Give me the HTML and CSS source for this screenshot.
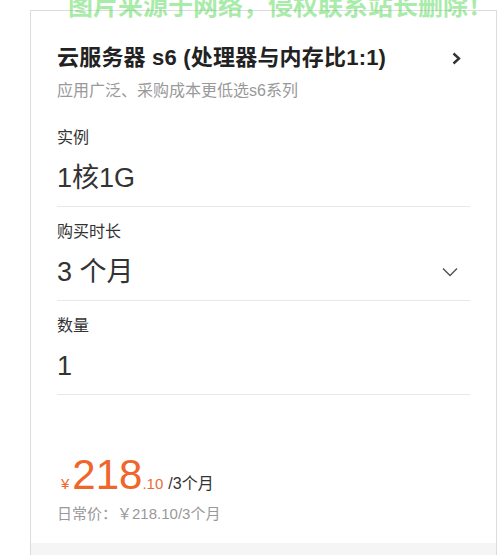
FILE: index.html
```html
<!DOCTYPE html>
<html lang="zh-CN">
<head>
  <meta charset="UTF-8" />
  <meta name="viewport" content="width=device-width, initial-scale=1.0"/>
  <title>云服务器 s6</title>
  <link rel="stylesheet" href="styles.css">
</head>

<body>

  <!-- Watermark -->
  <div class="watermark">图片来源于网络，侵权联系站长删除！</div>

  <div class="page">
    <div class="card">

      <!-- Product header -->
      <div class="card-head">
        <div class="title-row">
          <h2>云服务器 s6 (处理器与内存比1:1)</h2>
          <svg class="arrow-right" width="9" height="13" viewBox="0 0 9 13">
            <polyline points="1.5,1.5 7,6.5 1.5,11.5" fill="none" stroke="#333" stroke-width="2.4"/>
          </svg>
        </div>
        <p class="subtitle">应用广泛、采购成本更低选s6系列</p>
      </div>

      <!-- Options -->
      <div class="field">
        <div class="label">实例</div>
        <div class="value">1核1G</div>
      </div>

      <div class="field">
        <div class="label">购买时长</div>
        <div class="value value-select">
          <span>3 个月</span>
          <svg class="arrow-down" width="16" height="10" viewBox="0 0 16 10">
            <polyline points="1,1.5 8,8.5 15,1.5" fill="none" stroke="#555" stroke-width="1.5"/>
          </svg>
        </div>
      </div>

      <div class="field">
        <div class="label">数量</div>
        <div class="value">1</div>
      </div>

      <!-- Price -->
      <div class="price-box">
        <div class="price">
          <span class="yen">¥</span>
          <span class="amount">218</span>
          <span class="cents">.10</span>
          <span class="period">/3个月</span>
        </div>
        <div class="normal-price">日常价：￥218.10/3个月</div>
      </div>

      <div class="card-foot"></div>
    </div>
  </div>

</body>
</html>
```

FILE: styles.css
```css
body {
  margin: 0;
  font-family: "Liberation Sans", "Noto Sans CJK SC", sans-serif;
  background: #fff;
  color: #333;
  overflow: hidden;
}

.watermark {
  position: absolute;
  top: -14px;
  left: 68px;
  font-size: 25px;
  font-weight: bold;
  white-space: nowrap;
  color: rgba(60, 210, 60, 0.45);
  z-index: 2;
}

.page {
  padding: 10px 3px 0 30px;
}

.card {
  width: 467px;
  box-sizing: border-box;
  border: 1px solid #dcdcdc;
  border-bottom: none;
  background: #fff;
}

/* Header */
.card-head {
  padding: 33px 26px 11px 26px;
}

.title-row {
  display: flex;
  justify-content: space-between;
  align-items: center;
}

.title-row h2 {
  margin: 0;
  font-size: 22px;
  line-height: 28px;
  font-weight: bold;
  color: #222;
  letter-spacing: 0.2px;
}

.arrow-right {
  margin-right: 9px;
}

.subtitle {
  margin: 8px 0 0 0;
  font-size: 16px;
  line-height: 22px;
  color: #999;
}

/* Option fields */
.field {
  margin: 0 26px;
  padding: 14px 0 11px 0;
  border-bottom: 1px solid #e8e8e8;
}

.label {
  font-size: 16px;
  line-height: 22px;
  color: #333;
}

.value {
  margin-top: 12px;
  font-size: 27px;
  line-height: 34px;
  color: #333;
}

.value-select {
  display: flex;
  justify-content: space-between;
  align-items: center;
}

.arrow-down {
  margin-right: 12px;
}

/* Price */
.price-box {
  padding: 57px 26px 18px 26px;
}

.price {
  display: flex;
  align-items: baseline;
  color: #f0652a;
}

.yen {
  font-size: 15px;
  margin: 0 3px 0 4px;
}

.amount {
  font-size: 42px;
  line-height: 46px;
}

.cents {
  font-size: 15px;
  color: #ec6a3c;
}

.period {
  font-size: 16px;
  color: #333;
  margin-left: 5px;
}

.normal-price {
  margin-top: 5px;
  font-size: 15px;
  line-height: 22px;
  color: #999;
}

.card-foot {
  height: 12px;
  background: #f5f5f5;
}
```
